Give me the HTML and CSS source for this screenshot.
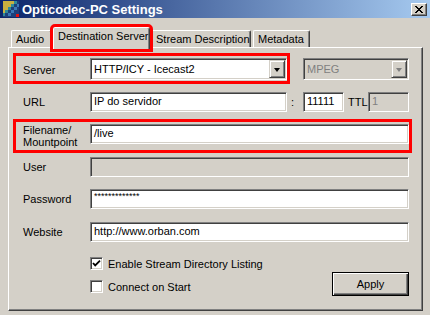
FILE: index.html
```html
<!DOCTYPE html>
<html>
<head>
<meta charset="utf-8">
<title>Opticodec-PC Settings</title>
<link rel="stylesheet" href="styles.css">
</head>
<body>
<div class="window">
  <div class="titlebar">
    <svg class="app-icon" width="16" height="16" viewBox="0 0 16 16">
      <rect x="0" y="0" width="16" height="16" fill="#1d3f7a"/>
      <polygon points="0,0 11,0 11,3 8,3 8,6 5,6 5,9 2,9 2,12 0,12" fill="#c8b040"/>
      <polygon points="11,0 14,0 14,3 11,3 11,6 8,6 8,9 5,9 5,12 2,12 2,15 0,15 0,12 2,12 2,9 5,9 5,6 8,6 8,3 11,3" fill="#2f8a9a"/>
      <polygon points="14,3 16,3 16,6 14,6 14,9 11,9 11,12 8,12 8,15 5,15 5,12 8,12 8,9 11,9 11,6 14,6" fill="#3a78b8"/>
      <rect x="13" y="13" width="3" height="3" fill="#e01010"/>
    </svg>
    <span class="title">Opticodec-PC Settings</span>
    <div class="close-btn">
      <svg width="8" height="7" viewBox="0 0 8 7"><path d="M0.5 0 L7.5 7 M1.5 0 L8.5 7 M7.5 0 L0.5 7 M8.5 0 L1.5 7" stroke="#000" stroke-width="1" fill="none" transform="translate(-0.5 0)"/></svg>
    </div>
  </div>

  <div class="tabs">
    <div class="tab tab-audio">Audio</div>
    <div class="tab tab-dest selected">Destination Server</div>
    <div class="tab tab-stream">Stream Description</div>
    <div class="tab tab-meta">Metadata</div>
  </div>

  <div class="panel">
    <div class="row row-server">
      <div class="hl hl-server">
        <span class="lbl">Server</span>
        <div class="combo combo-server">
          <span class="combo-text">HTTP/ICY - Icecast2</span>
          <span class="drop-btn"><span class="arrow"></span></span>
        </div>
      </div>
      <div class="combo combo-format disabled">
        <span class="combo-text">MPEG</span>
        <span class="drop-btn"><span class="arrow"></span></span>
      </div>
    </div>

    <div class="row row-url">
      <span class="lbl">URL</span>
      <div class="field field-url">IP do servidor</div>
      <span class="colon">:</span>
      <div class="field field-port">11111</div>
      <span class="ttl">TTL</span>
      <div class="field field-ttl disabled">1</div>
    </div>

    <div class="row row-file hl">
      <span class="lbl lbl-two">Filename/<br>Mountpoint</span>
      <div class="field field-wide field-file">/live</div>
    </div>

    <div class="row row-user">
      <span class="lbl">User</span>
      <div class="field field-wide disabled"></div>
    </div>

    <div class="row row-pass">
      <span class="lbl">Password</span>
      <div class="field field-wide field-pass">*************</div>
    </div>

    <div class="row row-web">
      <span class="lbl">Website</span>
      <div class="field field-wide">http://www.orban.com</div>
    </div>

    <div class="bottom">
      <div class="checks">
        <div class="check">
          <span class="box"><svg width="9" height="9" viewBox="0 0 9 9"><path d="M1 4 L3.2 6.4 L8 1.6" stroke="#000" stroke-width="1.8" fill="none"/></svg></span>
          <span>Enable Stream Directory Listing</span>
        </div>
        <div class="check check-2">
          <span class="box"></span>
          <span>Connect on Start</span>
        </div>
      </div>
      <div class="apply"><span>Apply</span></div>
    </div>
  </div>
</div>
</body>
</html>
```

FILE: styles.css
```css
* { box-sizing: border-box; }

html, body {
  margin: 0;
  padding: 0;
}

body {
  width: 430px;
  height: 315px;
  overflow: hidden;
  background: #D4D0C8;
  font-family: "Liberation Sans", Arial, sans-serif;
  font-size: 11px;
  color: #000;
}

.window {
  width: 430px;
  height: 315px;
}

/* Title bar */
.titlebar {
  height: 18px;
  display: flex;
  align-items: center;
  padding: 0 3px 0 3px;
  background: linear-gradient(to right, #0A246A, #A6CAF0);
}

.app-icon {
  display: block;
  margin-right: 3px;
  flex: none;
}

.title {
  flex: 1;
  color: #fff;
  font-weight: bold;
  font-size: 13px;
  line-height: 15px;
}

.close-btn {
  width: 16px;
  height: 13px;
  background: #D4D0C8;
  border-top: 1px solid #fff;
  border-left: 1px solid #fff;
  border-right: 1px solid #404040;
  border-bottom: 1px solid #404040;
  box-shadow: inset -1px -1px 0 #808080;
  display: flex;
  align-items: center;
  justify-content: center;
}

.close-btn svg { display: block; }

/* Tabs */
.tabs {
  height: 29px;
  display: flex;
  align-items: flex-end;
  padding-left: 11px;
}

.tab {
  height: 17px;
  line-height: 16px;
  background: #D4D0C8;
  border-top: 1px solid #fff;
  border-left: 1px solid #fff;
  border-right: 1px solid #404040;
  box-shadow: inset -1px 0 0 #808080;
  border-radius: 2px 2px 0 0;
  padding-left: 4px;
  white-space: nowrap;
}

.tab-audio { width: 41px; }
.tab-dest { width: 97px; margin-left: 1px; }
.tab-stream { width: 100px; margin-left: 1px; }
.tab-meta { width: 57px; margin-left: 2px; }

.tab.selected {
  height: 22px;
  line-height: 17px;
  margin-bottom: -2px;
  position: relative;
  z-index: 2;
  outline: 3px solid #ff0000;
}

/* Panel */
.panel {
  margin-left: 8px;
  width: 415px;
  height: 264px;
  border-top: 1px solid #fff;
  border-left: 1px solid #fff;
  border-right: 1px solid #404040;
  border-bottom: 1px solid #404040;
  box-shadow: inset -1px -1px 0 #808080;
  padding: 8px 13px 0 7px;
}

.row {
  display: flex;
  align-items: center;
  padding-left: 7px;
  height: 20px;
}

.lbl {
  width: 67px;
  flex: none;
  white-space: nowrap;
}

.lbl-two {
  line-height: 12px;
}

.hl {
  outline: 3px solid #ff0000;
}

/* Server row */
.row-server {
  padding-left: 0;
  height: 25px;
  align-items: flex-start;
}

.hl-server {
  display: flex;
  align-items: center;
  padding-left: 7px;
  width: 271px;
  height: 25px;
}

.hl-server .lbl { margin-top: 2px; }

.combo {
  height: 22px;
  display: flex;
  align-items: center;
  background: #fff;
  border: 1px solid;
  border-color: #808080 #fff #fff #808080;
  box-shadow: inset 1px 1px 0 #404040, inset -1px -1px 0 #D4D0C8;
  padding: 1px;
}

.combo-server {
  width: 197px;
  margin-top: 2px;
  align-self: flex-start;
}

.combo-format {
  width: 106px;
  margin-left: 16px;
  margin-top: 2px;
}

.combo-text {
  flex: 1;
  padding-left: 2px;
  white-space: nowrap;
}

.drop-btn {
  width: 16px;
  height: 18px;
  flex: none;
  background: #D4D0C8;
  border-top: 1px solid #D4D0C8;
  border-left: 1px solid #D4D0C8;
  border-right: 1px solid #404040;
  border-bottom: 1px solid #404040;
  box-shadow: inset 1px 1px 0 #fff, inset -1px -1px 0 #808080;
  display: flex;
  align-items: center;
  justify-content: center;
}

.arrow {
  width: 0;
  height: 0;
  border-left: 3.5px solid transparent;
  border-right: 3.5px solid transparent;
  border-top: 4px solid #000;
  margin-top: 1px;
}

.combo.disabled {
  background: #D4D0C8;
  color: #808080;
}

.combo.disabled .arrow {
  border-top-color: #808080;
}

/* Fields */
.field {
  height: 20px;
  line-height: 16px;
  background: #fff;
  border: 1px solid;
  border-color: #808080 #fff #fff #808080;
  box-shadow: inset 1px 1px 0 #404040, inset -1px -1px 0 #D4D0C8;
  padding-left: 3px;
  white-space: nowrap;
  overflow: hidden;
}

.field.disabled {
  background: #D4D0C8;
  color: #808080;
}

.row-url { margin-top: 11px; }

.field-url { width: 197px; }

.colon {
  width: 16px;
  padding-left: 4px;
  flex: none;
}

.field-port { width: 41px; }

.ttl {
  width: 20px;
  margin-left: 4px;
  flex: none;
}

.field-ttl { width: 41px; }

.field-wide { width: 319px; }

.row-file {
  margin-top: 10px;
  height: 28px;
  align-items: flex-start;
}

.row-file .lbl { margin-top: 2px; }
.row-file .field { margin-top: 2px; }

.row-user { margin-top: 7px; }
.row-pass { margin-top: 12px; }
.row-web { margin-top: 13px; }

.field-pass {
  font-size: 9px;
  line-height: 13px;
  letter-spacing: 0;
}

/* Bottom area */
.bottom {
  margin-top: 14px;
  display: flex;
  align-items: flex-start;
  padding-left: 74px;
}

.checks {
  display: flex;
  flex-direction: column;
  margin-top: 1px;
}

.check {
  display: flex;
  align-items: center;
  height: 13px;
  white-space: nowrap;
}

.check-2 { margin-top: 10px; }

.box {
  width: 13px;
  height: 13px;
  margin-right: 5px;
  background: #fff;
  border: 1px solid;
  border-color: #808080 #fff #fff #808080;
  box-shadow: inset 1px 1px 0 #404040, inset -1px -1px 0 #D4D0C8;
  display: flex;
  align-items: center;
  justify-content: center;
}

.box svg { display: block; }

.apply {
  margin-left: auto;
  margin-top: 16px;
  width: 77px;
  height: 24px;
  border: 1px solid #000;
  background: #D4D0C8;
  box-shadow: inset 1px 1px 0 #fff, inset -1px -1px 0 #404040, inset -2px -2px 0 #808080;
  display: flex;
  align-items: center;
  justify-content: center;
}
```
